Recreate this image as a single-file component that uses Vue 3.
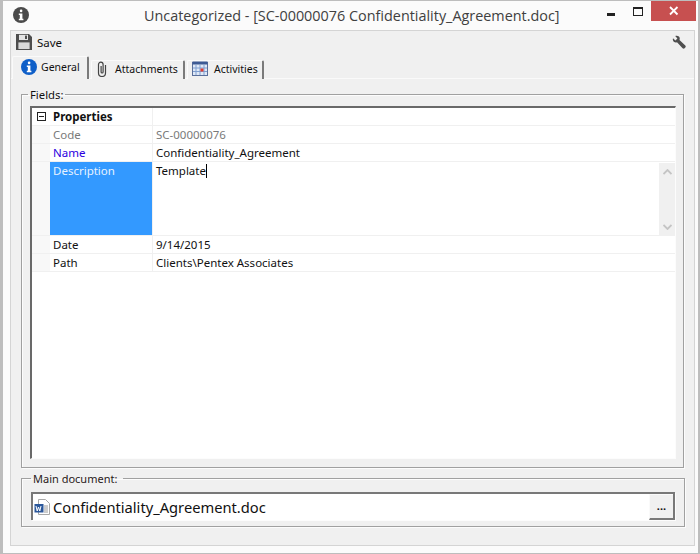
<script setup>
const rows = [
  { key: 'Code', value: 'SC-00000076', kind: 'muted' },
  { key: 'Name', value: 'Confidentiality_Agreement', kind: 'required' },
  { key: 'Description', value: 'Template', kind: 'selected' },
  { key: 'Date', value: '9/14/2015', kind: '' },
  { key: 'Path', value: 'Clients\\Pentex Associates', kind: '' },
]
</script>

<template>
  <div class="window">
    <header class="titlebar">
      <svg class="app-icon" viewBox="0 0 16 16" width="16" height="16">
        <circle cx="8" cy="8" r="8" fill="#4a4a4a" />
        <rect x="6.800" y="2.600" width="2.600" height="2.600" rx="1.200" fill="#fff" />
        <path d="M5.800 6.600h3.600v5.200h1v1.400H5.800v-1.400h1V8H5.800z" fill="#fff" />
      </svg>
      <span class="title">Uncategorized - [SC-00000076 Confidentiality_Agreement.doc]</span>
      <div class="controls">
        <span class="minimize"></span>
        <span class="maximize"></span>
        <span class="close">
          <svg viewBox="0 0 10 10" width="10" height="10">
            <path d="M1 1l7.500 7.500M8.500 1L1 8.500" stroke="#fff" stroke-width="1.800" />
          </svg>
        </span>
      </div>
    </header>

    <main class="client">
      <div class="toolbar">
        <button class="save">
          <svg viewBox="0 0 16 16" width="16" height="16">
            <path d="M0 0h13l3 3v13H0z" fill="#4d4d4d" />
            <rect x="3" y="0.800" width="9" height="5.200" fill="#e4e4e4" />
            <rect x="9" y="1.600" width="2" height="3.400" fill="#4d4d4d" />
            <rect x="2.400" y="8.400" width="11.200" height="6.600" fill="#d8d8d8" />
          </svg>
          <span>Save</span>
        </button>
        <svg class="wrench" viewBox="0 0 14 14" width="14" height="14">
          <path d="M1 3.200L3.400 5.400 5.400 3.600 3.200 1C5 .2 7 .8 7.600 2.600c.3.900.2 1.700-.1 2.300l5.800 5.600c.6.600.6 1.500 0 2.100l-.7.700c-.6.600-1.400.5-2-.1L5 7.200C3.400 7.800 1.800 7.200 1.100 5.800.7 5 .7 4 1 3.200z" fill="#4f4f4f" />
        </svg>
      </div>

      <nav class="tabs">
        <div class="tab active">
          <svg viewBox="0 0 16 16" width="16" height="16">
            <circle cx="8" cy="8" r="8" fill="#0f5fc8" />
            <rect x="6.800" y="2.600" width="2.600" height="2.600" rx="1.200" fill="#fff" />
            <path d="M5.800 6.600h3.600v5.200h1v1.400H5.800v-1.400h1V8H5.800z" fill="#fff" />
          </svg>
          <span>General</span>
        </div>
        <div class="tab attach">
          <svg viewBox="0 0 12 16" width="12" height="16">
            <path d="M9.500 4v8a3.500 3.500 0 0 1-7 0V3.500a2.300 2.300 0 0 1 4.600 0V11a1 1 0 0 1-2 0V5" fill="none" stroke="#444" stroke-width="1.200" />
          </svg>
          <span>Attachments</span>
        </div>
        <div class="tab act">
          <svg viewBox="0 0 16 16" width="16" height="16">
            <rect x="0.500" y="1.500" width="15" height="13" fill="#dfe8f6" stroke="#5a6f9a" />
            <rect x="0.500" y="0.500" width="15" height="3" fill="#3d5a94" />
            <path d="M4 4v10M8 4v10M12 4v10M1 7h14M1 10.500h14" stroke="#7f9fd0" />
            <rect x="8.500" y="7.500" width="3" height="3" fill="#e03c31" />
          </svg>
          <span>Activities</span>
        </div>
      </nav>

      <fieldset class="group fields">
        <legend>Fields:</legend>
        <div class="grid">
          <div class="row head">
            <div class="gutter">
              <span class="collapse"></span>
            </div>
            <div class="key">Properties</div>
            <div class="val"></div>
          </div>
          <div v-for="r in rows" :key="r.key" class="row" :class="r.kind">
            <div class="gutter"></div>
            <div class="key">{{ r.key }}</div>
            <div class="val">
              <span class="val-text">{{ r.value }}<i v-if="r.kind === 'selected'" class="caret"></i></span>
              <div v-if="r.kind === 'selected'" class="scroll">
                <svg viewBox="0 0 9 6" width="9" height="6"><path d="M.5 5L4.500 1l4 4" fill="none" stroke="#c4c4c4" stroke-width="1.800" /></svg>
                <svg viewBox="0 0 9 6" width="9" height="6"><path d="M.5 1l4 4 4-4" fill="none" stroke="#c4c4c4" stroke-width="1.800" /></svg>
              </div>
            </div>
          </div>
        </div>
      </fieldset>

      <fieldset class="group main-doc">
        <legend>Main document:</legend>
        <div class="doc-input">
          <svg class="doc-icon" viewBox="0 0 16 16" width="16" height="16">
            <path d="M4.500.5h7l4 4v11h-11z" fill="#fff" stroke="#a8a8a8" />
            <path d="M10 7h4M10 9h4M10 11h4M10 13h4" stroke="#9a9a9a" />
            <rect x="0.500" y="5" width="9" height="8.500" fill="#2b579a" />
            <path d="M2 7l1.200 5 1.300-4 1.300 4L7 7" fill="none" stroke="#fff" stroke-width="1" />
          </svg>
          <span class="doc-name">Confidentiality_Agreement.doc</span>
          <button class="browse">...</button>
        </div>
      </fieldset>
    </main>
  </div>
</template>

<style>
html, body { margin: 0; padding: 0; }
</style>

<style scoped>
.window {
  width: 700px;
  height: 554px;
  box-sizing: border-box;
  background: #fbfbfb;
  border: 1px solid #bdbdbd;
  border-width: 1px 2px 1px 3px;
  display: flex;
  flex-direction: column;
  font-family: "Noto Sans", "DejaVu Sans", sans-serif;
  font-size: 11.500px;
  color: #111;
  overflow: hidden;
}
.titlebar {
  height: 29px;
  flex: none;
  display: flex;
  align-items: center;
  justify-content: space-between;
  position: relative;
}
.app-icon { margin: -1px 0 0 10px; }
.title {
  position: absolute;
  left: 141px;
  top: 5px;
  font-family: "Open Sans", sans-serif;
  font-size: 14.400px;
  color: #404040;
  white-space: nowrap;
}
.controls {
  align-self: flex-start;
  display: flex;
  align-items: flex-start;
}
.minimize { width: 8px; height: 3px; margin: 12px 18px 0 0; background: #222; }
.maximize {
  box-sizing: border-box;
  width: 10px;
  height: 9px;
  margin: 6px 8px 0 0;
  border: 1px solid #222;
  border-top-width: 2px;
}
.close {
  width: 45px;
  height: 20px;
  margin-right: 2px;
  background: #c75050;
  display: flex;
  align-items: center;
  justify-content: center;
}
.client {
  flex: 1;
  margin: 0 3px 7px 7px;
  background: #f0f0f0;
  border: 1px solid #d4d4d4;
  display: flex;
  flex-direction: column;
  min-height: 0;
}
.toolbar {
  height: 22px;
  flex: none;
  display: flex;
  align-items: center;
  justify-content: space-between;
  padding: 0 8px 0 5px;
}
.save {
  display: flex;
  align-items: center;
  gap: 5px;
  padding: 0;
  background: none;
  border: 0;
  font: inherit;
  color: inherit;
}
.tabs {
  height: 25px;
  flex: none;
  display: flex;
  align-items: flex-end;
  padding-left: 1px;
  gap: 2px;
  border-bottom: 1px solid #fafafa;
  font-size: 10.500px;
}
.tab {
  display: flex;
  align-items: center;
  height: 19px;
  box-sizing: border-box;
  padding-bottom: 2px;
  background: #f0f0f0;
  border-top: 1px solid #fafafa;
  border-left: 1px solid #fafafa;
  border-right: 2px solid #7a7a7a;
  border-radius: 2px 2px 0 0;
  margin-bottom: -1px;
}
.tab svg { flex: none; }
.tab.active {
  width: 77px;
  height: 23px;
  padding: 0 0 3px 8px;
  gap: 4px;
  border-bottom: 0;
  position: relative;
  z-index: 1;
}
.tab.attach { width: 94px; padding-left: 4px; gap: 7px; }
.tab.act { width: 77px; padding-left: 4px; gap: 6px; }
.group {
  margin: 0;
  padding: 0;
  border: 1px solid #a0a0a0;
  box-shadow: 1px 1px 0 #fcfcfc, inset 1px 1px 0 #fcfcfc;
  min-width: 0;
}
.group legend {
  padding: 0 2px;
  line-height: 13px;
}
.fields {
  flex: none;
  margin: 9px 10px 0 10px;
  height: 380px;
  box-sizing: border-box;
  padding: 5px 7px 8px 8px;
}
.fields legend { margin-left: -2px; font-size: 11.300px; }
.grid {
  height: 353px;
  box-sizing: border-box;
  background: #fff;
  border-top: 2px solid #696969;
  border-left: 2px solid #696969;
  border-right: 1px solid #fcfcfc;
  border-bottom: 1px solid #fcfcfc;
}
.row {
  display: flex;
  height: 18px;
  border-bottom: 1px solid #f0f0f0;
  box-sizing: border-box;
}
.row.selected { height: 74px; }
.gutter {
  width: 18px;
  flex: none;
  background: #f8f8f8;
  display: flex;
  align-items: center;
  justify-content: center;
}
.row.head .gutter { background: #fff; }
.collapse {
  width: 9px;
  height: 9px;
  border: 1px solid #222;
  position: relative;
  box-sizing: border-box;
}
.collapse::after {
  content: "";
  position: absolute;
  left: 1px;
  right: 1px;
  top: 3px;
  height: 1px;
  background: #222;
}
.key {
  width: 103px;
  flex: none;
  box-sizing: border-box;
  padding-left: 3px;
  line-height: 17px;
  border-right: 1px solid #f0f0f0;
  white-space: nowrap;
}
.val {
  flex: 1;
  position: relative;
  padding-left: 3px;
  line-height: 17px;
  white-space: nowrap;
}
.head .key { font-weight: 700; }
.muted .key, .muted .val { color: #7a7a7a; }
.required .key { color: #2a00e0; }
.selected .key { background: #3399ff; color: #e6f2ff; }
.caret {
  display: inline-block;
  width: 1px;
  height: 14px;
  background: #000;
  vertical-align: -3px;
}
.scroll {
  position: absolute;
  top: 1px;
  right: 0;
  bottom: 0;
  width: 16px;
  background: #f0f0f0;
  display: flex;
  flex-direction: column;
  align-items: center;
  justify-content: space-between;
  padding: 6px 0 5px;
  box-sizing: border-box;
}
.main-doc {
  flex: none;
  margin: 4px 9px 0 10px;
  height: 55px;
  box-sizing: border-box;
  padding: 7px 9px 0 9px;
}
.main-doc legend { margin-left: 0; padding-right: 6px; font-size: 11px; color: #2a1a1a; }
.doc-input {
  height: 28px;
  box-sizing: border-box;
  background: #fff;
  border-top: 2px solid #787878;
  border-left: 2px solid #787878;
  border-right: 2px solid #787878;
  box-shadow: 1px 1px 0 #fcfcfc;
  display: flex;
  align-items: center;
  padding-left: 1px;
  gap: 3px;
}
.doc-name {
  font-size: 14.700px;
  flex: 1;
  white-space: nowrap;
  margin-top: -1px;
}
.browse {
  align-self: flex-start;
  width: 24px;
  height: 26px;
  box-sizing: border-box;
  margin: 0;
  padding: 0 0 2px;
  background: #f0f0f0;
  border: 1px solid #fafafa;
  border-right: 0;
  border-bottom: 2px solid #787878;
  font: 700 11px "Noto Sans", sans-serif;
  color: #111;
}
</style>
